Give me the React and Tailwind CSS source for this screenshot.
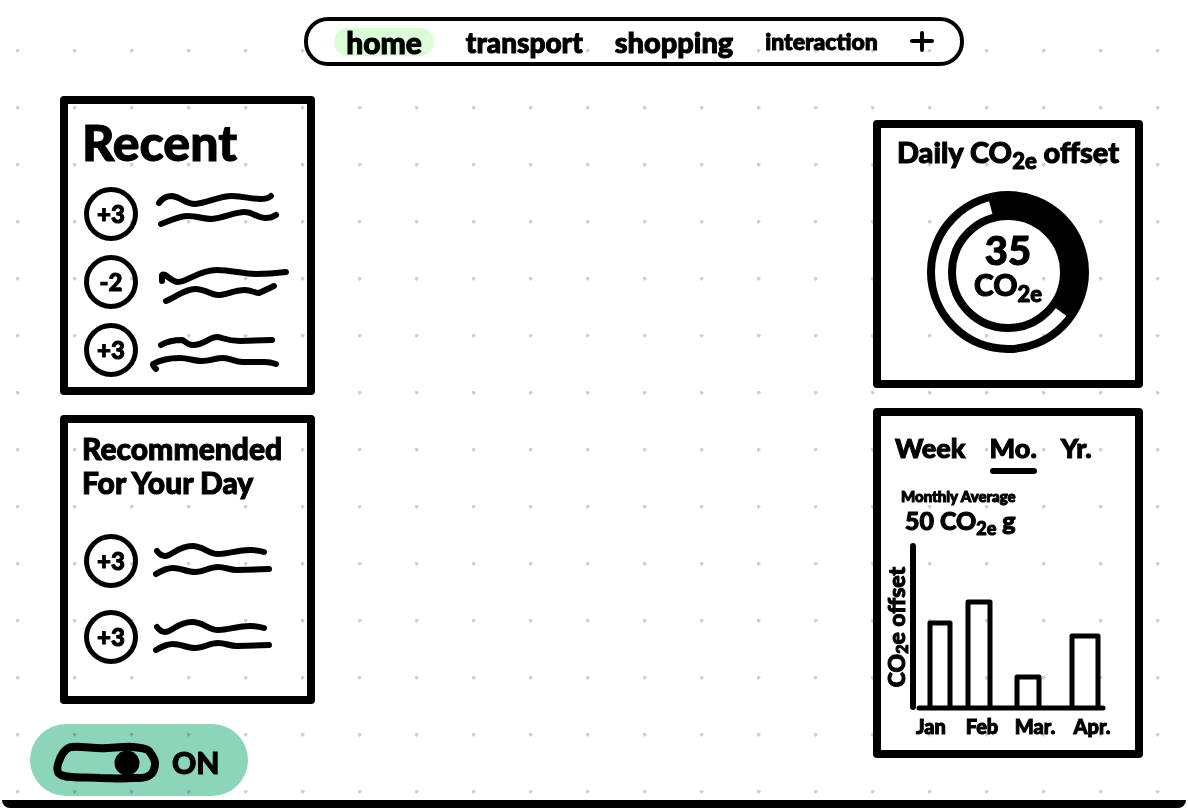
import { useState } from "react";
import clsx from "clsx";

const NAV_LINKS = [
  { label: "transport", className: "text-[28px]" },
  { label: "shopping", className: "text-[29px]" },
  { label: "interaction", className: "text-[23px]" },
];

const RECENT = [
  {
    score: "+3",
    lines: [
      "M9 16C13 10 18 9 22 9C31 10 36 17 45 17C58 16 68 9 82 9C94 9 100 12 110 12C116 12 119 11 121 9",
      "M11 37C20 34 28 29 38 29C47 29 53 32 62 32C74 31 84 25 95 25C104 25 106 31 115 31C119 31 123 30 126 28",
    ],
  },
  {
    score: "-2",
    lines: [
      "M12 26L12 20C15 17 21 27 28 27C38 27 48 15 67 15C82 15 92 19 106 19C118 19 128 18 136 17",
      "M16 46C26 42 35 34 45 34C56 34 60 40 68 40C77 40 83 35 95 35C101 35 105 38 109 38L124 31",
    ],
  },
  {
    score: "+3",
    lines: [
      "M11 22C18 18 25 17 32 17C36 18 36 22 43 22C54 22 59 14 67 14C72 14 76 18 90 18L122 17",
      "M6 46C3 43 3 42 3 41C10 37 20 35 30 35C38 35 44 38 52 38C60 38 66 35 73 35C81 35 84 39 93 39L115 39C120 39 123 40 126 41",
    ],
  },
];

const SUGGESTION_LINES = [
  "M7 17C10 21 13 22 15 22C22 22 28 12 42 12C54 12 58 20 68 20C79 20 87 16 100 16C108 16 111 17 114 18",
  "M6 40C11 37 17 34 23 34C31 34 37 38 45 38C54 38 59 33 68 33C76 33 79 36 87 36L119 35",
];

const RECOMMENDED = [
  { score: "+3", lines: SUGGESTION_LINES },
  { score: "+3", lines: SUGGESTION_LINES },
];

const RANGES = ["Week", "Mo.", "Yr."];

const MONTHS = [
  { label: "Jan", x: 49, width: 20, top: 83, labelX: 50 },
  { label: "Feb", x: 87, width: 22, top: 62, labelX: 101 },
  { label: "Mar.", x: 136, width: 22, top: 137, labelX: 154 },
  { label: "Apr.", x: 191, width: 26, top: 96, labelX: 211 },
];

function Card({ className, children }) {
  return <section className={clsx("rounded border-8 border-black", className)}>{children}</section>;
}

function ScoreList({ items, className }) {
  return (
    <ul className={clsx("flex flex-col pl-0.5", className)}>
      {items.map((item, i) => (
        <li key={i} className="flex items-center gap-3">
          <span className="flex size-[54px] shrink-0 items-center justify-center rounded-full border-[5px] border-black text-2xl">
            {item.score}
          </span>
          <svg className="h-[54px] w-[140px] shrink-0" viewBox="0 0 140 54" fill="none" stroke="currentColor" strokeWidth="6" strokeLinecap="round" strokeLinejoin="round" aria-hidden>
            {item.lines.map((d) => (
              <path key={d} d={d} />
            ))}
          </svg>
        </li>
      ))}
    </ul>
  );
}

function OffsetDonut() {
  return (
    <div className="mx-auto grid size-[162px] place-items-center">
      <svg className="col-start-1 row-start-1 size-full" viewBox="0 0 162 162" fill="none" stroke="currentColor" aria-hidden>
        <circle cx="81" cy="81" r="77" strokeWidth="8" />
        <circle cx="81" cy="81" r="56" strokeWidth="8" />
        <path d="M63.8 16.8A66.5 66.5 0 0 1 134.1 121" strokeWidth="17" />
      </svg>
      <div className="col-start-1 row-start-1 flex flex-col items-center pb-3">
        <p className="text-[40px] leading-9">35</p>
        <p className="text-[30px] leading-8">
          CO<sub className="text-[22px]">2e</sub>
        </p>
      </div>
    </div>
  );
}

function MonthlyChart() {
  return (
    <svg className="mt-1.5 w-full" viewBox="0 0 254 200" role="img" aria-label="CO2e offset by month">
      <g fill="none" stroke="currentColor" strokeLinecap="round" strokeLinejoin="round">
        <path d="M32 6V167" strokeWidth="6" />
        <path d="M38 168H222" strokeWidth="5" />
        {MONTHS.map((m) => (
          <path key={m.label} d={`M${m.x} 166V${m.top}h${m.width}V166`} strokeWidth="5" />
        ))}
      </g>
      <g fill="currentColor" stroke="currentColor" strokeWidth="1" textAnchor="middle">
        {MONTHS.map((m) => (
          <text key={m.label} x={m.labelX} y="194" className="text-[20px]">
            {m.label}
          </text>
        ))}
        <text transform="translate(24 87) rotate(-90)" className="text-[23px]">
          CO
          <tspan dy="3" className="text-[16px]">2</tspan>
          <tspan dy="-3">e offset</tspan>
        </text>
      </g>
    </svg>
  );
}

function PowerToggle() {
  const [on, setOn] = useState(true);

  return (
    <label className="flex h-[72px] w-[218px] cursor-pointer items-center gap-3 rounded-full bg-[#8dd5b8] pt-1 pl-[23px] text-[30px] mix-blend-multiply">
      <input type="checkbox" role="switch" className="sr-only" checked={on} onChange={(e) => setOn(e.target.checked)} />
      <svg className="h-[41px] w-[107px]" viewBox="0 0 107 41" fill="none" stroke="currentColor" strokeWidth="8" strokeLinejoin="round" aria-hidden>
        <path d="M19 5C30 4 42 7 54 6C64 6 72 4 80 5C87 6 93 6 96 9C99 13 102 17 102 21C102 27 100 31 97 33C92 37 86 36 80 36C68 37 58 36 47 36C37 35 28 36 19 35C12 35 6 33 5 30C3 26 6 17 10 11C13 7 16 5 19 5Z" />
        <circle cx={on ? 74 : 25} cy="21" r="12.5" fill="currentColor" stroke="none" />
      </svg>
      {on ? "ON" : "OFF"}
    </label>
  );
}

export default function App() {
  const [range, setRange] = useState("Mo.");

  return (
    <div className="flex min-h-screen flex-col bg-white bg-[radial-gradient(circle,#d0d0d0_1px,#d8d8d8_2px,transparent_2px)] bg-[length:57px_57px] bg-[position:-11px_22px] font-['Lato',sans-serif] font-black text-black [-webkit-text-stroke:1px_black]">
      <header className="flex justify-center pt-[17px] pl-20">
        <nav className="flex h-[49px] items-center gap-8 rounded-3xl border-4 border-black px-[26px]">
          <a href="#home" aria-current="page" className="rounded-full bg-[#dbfdd8] px-3 text-[30px] leading-7 mix-blend-multiply">
            home
          </a>
          {NAV_LINKS.map((link) => (
            <a key={link.label} href={`#${link.label}`} className={link.className}>
              {link.label}
            </a>
          ))}
          <button type="button" aria-label="Add section">
            <svg className="size-6" viewBox="0 0 24 24" fill="none" stroke="currentColor" strokeWidth="4" strokeLinecap="round" aria-hidden>
              <path d="M2 11H22M12 3V20" />
            </svg>
          </button>
        </nav>
      </header>

      <main className="flex grow justify-between pt-[30px] pr-[45px] pl-[30px]">
        <div className="flex flex-col gap-5">
          <Card className="ml-[30px] w-[255px] px-3.5 py-2.5">
            <h2 className="text-[50px] leading-14">Recent</h2>
            <ScoreList items={RECENT} className="mt-[17px] gap-3.5" />
          </Card>
          <Card className="ml-[30px] w-[255px] px-3.5 pt-2 pb-8">
            <h2 className="text-[30px] leading-[34px]">
              Recommended
              <br />
              For Your Day
            </h2>
            <ScoreList items={RECOMMENDED} className="mt-[35px] gap-[22px]" />
          </Card>
          <PowerToggle />
        </div>

        <div className="flex w-[270px] flex-col gap-5 pt-6">
          <Card className="h-[268px] pt-2">
            <h2 className="text-center text-[29px] leading-8">
              Daily CO<sub className="text-[22px]">2e</sub> offset
            </h2>
            <div className="mt-[23px]">
              <OffsetDonut />
            </div>
          </Card>
          <Card className="pt-4 pb-2.5">
            <div className="flex gap-6 pl-3.5 text-[27px] leading-8">
              {RANGES.map((r) => (
                <button key={r} type="button" aria-pressed={range === r} onClick={() => setRange(r)}>
                  {r}
                  <span className={clsx("mt-1 block h-1.5 rounded-full", range === r && "bg-black")} />
                </button>
              ))}
            </div>
            <p className="mt-3 pl-5 text-[15px] leading-5">Monthly Average</p>
            <p className="pl-6 text-[25px] leading-7">
              50 CO<sub className="text-[18px]">2e</sub> g
            </p>
            <MonthlyChart />
          </Card>
        </div>
      </main>

      <footer className="mx-0.5 mt-1 h-2 rounded-b-lg bg-black" />
    </div>
  );
}
